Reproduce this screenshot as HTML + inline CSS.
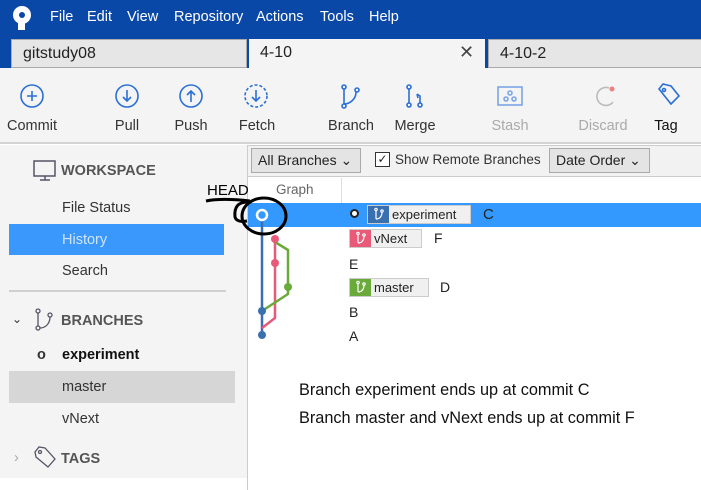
<!DOCTYPE html><html><head><style>
*{margin:0;padding:0;box-sizing:border-box}
body{width:701px;height:490px;overflow:hidden;background:#fff;font-family:"Liberation Sans",sans-serif;position:relative;font-size:14px;color:#222}
.a{position:absolute}
.menu{left:0;top:0;width:701px;height:37px;background:#0a48a8;color:#fff;font-size:14.5px}
.menu span{position:absolute;top:9px}
.tabs{left:0;top:37px;width:701px;height:31px;background:#0a48a8}
.tab{position:absolute;top:2px;height:29px;background:#e6e6e6;border:1px solid #aaa;font-size:16px;padding:5px 11px;color:#222}
.tb{left:0;top:68px;width:701px;height:76px;background:#f4f4f4;border-bottom:2px solid #d4d4d4}
.lbl{position:absolute;top:50px;font-size:14.5px;color:#333;transform:translateX(-50%)}
.side{left:0;top:145px;width:247px;height:333px;background:#f4f4f4}
.si{position:absolute;font-size:14.5px;color:#333}
.bi{position:absolute;left:0;top:0;width:21px;height:17px}
</style></head><body>
<div class="a menu">
<svg class="a" style="left:10px;top:5px" width="24" height="26"><circle cx="12" cy="10" r="9" fill="#fff"/><circle cx="12" cy="10" r="3" fill="#0a48a8"/><rect x="8" y="14" width="7" height="11" fill="#fff"/></svg>
<span style="left:50px">File</span><span style="left:87px">Edit</span><span style="left:127px">View</span><span style="left:174px">Repository</span><span style="left:256px">Actions</span><span style="left:320px">Tools</span><span style="left:369px">Help</span>
</div>
<div class="a tabs">
<div class="tab" style="left:11px;width:236px">gitstudy08</div>
<div class="tab" style="left:249px;width:236px;background:#f4f4f4;border:none;height:31px">4-10<span style="position:absolute;left:210px;top:3px;font-size:18px;color:#444">✕</span></div>
<div class="tab" style="left:488px;width:220px">4-10-2</div>
</div>
<div class="a tb">
<svg class="a" style="left:0;top:0" width="701" height="60" fill="none" stroke-width="1.6">
<g stroke="#2a6fd6"><circle cx="32" cy="28" r="11"/><path d="M32 23v10M27 28h10"/>
<circle cx="127" cy="28" r="11"/><path d="M127 22v11M123 29l4 4 4-4"/>
<circle cx="191" cy="28" r="11"/><path d="M191 34v-11M187 27l4-4 4 4"/>
<circle cx="256" cy="28" r="11" stroke-dasharray="3 2"/><path d="M256 22v11M252 29l4 4 4-4"/>
<path d="M344 21v15M344 36c5 0 12-4 12-12"/><circle cx="344" cy="19" r="2"/><circle cx="344" cy="38" r="2"/><circle cx="357" cy="22" r="2"/>
<path d="M409 21v14"/><circle cx="409" cy="19" r="2"/><circle cx="409" cy="37" r="2"/><circle cx="420" cy="37" r="2"/><path d="M420 35v-7l-3-2M417 26l1 4"/>
<path d="M659 21l4-5 8 2 8 10-8 8z"/><circle cx="664" cy="22" r="1.5"/></g>
<g stroke="#7aa7e8"><rect x="498" y="19" width="24" height="18"/><circle cx="510" cy="25" r="2"/><circle cx="506" cy="31" r="2"/><circle cx="514" cy="31" r="2"/></g>
<path d="M609 20a9 9 0 1 0 4 14" stroke="#bbb"/><circle cx="612" cy="21" r="2.5" fill="#f08080"/>
</svg>
<span class="lbl" style="left:32px">Commit</span><span class="lbl" style="left:127px">Pull</span><span class="lbl" style="left:191px">Push</span><span class="lbl" style="left:257px">Fetch</span><span class="lbl" style="left:351px">Branch</span><span class="lbl" style="left:415px">Merge</span><span class="lbl" style="left:510px;color:#aaa">Stash</span><span class="lbl" style="left:603px;color:#aaa">Discard</span><span class="lbl" style="left:666px;color:#111">Tag</span>
</div>
<div class="a side">
<svg class="a" style="left:33px;top:15px" width="24" height="24" fill="none" stroke="#556"><rect x="1" y="1" width="21" height="15" stroke-width="1.5"/><path d="M7 20h10M12 16v4" stroke-width="1.5"/></svg>
<span class="si" style="left:61px;top:18px;font-weight:bold;color:#555">WORKSPACE</span>
<span class="si" style="left:62px;top:55px">File Status</span>
<div class="a" style="left:9px;top:79px;width:215px;height:31px;background:#3a97fb"></div>
<span class="si" style="left:62px;top:87px;color:#cfe4ff">History</span>
<span class="si" style="left:62px;top:118px">Search</span>
<div class="a" style="left:9px;top:145px;width:217px;height:2px;background:#d0d0d0"></div>
<span class="si" style="left:12px;top:167px;font-size:12px">⌄</span>
<svg class="a" style="left:34px;top:163px" width="20" height="24" fill="none" stroke="#556" stroke-width="1.3"><circle cx="4" cy="3" r="2"/><circle cx="4" cy="20" r="2"/><circle cx="16" cy="7" r="2"/><path d="M4 5v13M6 20c6 0 10-5 10-11"/></svg>
<span class="si" style="left:61px;top:168px;font-weight:bold;color:#555">BRANCHES</span>
<span class="si" style="left:37px;top:202px;font-weight:bold">o</span>
<span class="si" style="left:62px;top:202px;font-weight:bold;color:#111">experiment</span>
<div class="a" style="left:9px;top:226px;width:226px;height:32px;background:#d6d6d6"></div>
<span class="si" style="left:62px;top:234px">master</span>
<span class="si" style="left:62px;top:266px">vNext</span>
<span class="si" style="left:14px;top:305px;color:#aaa">›</span>
<svg class="a" style="left:33px;top:300px" width="24" height="24" fill="none" stroke="#556" stroke-width="1.3"><path d="M2 7l4-5 6 1 10 11-7 8L3 12z"/><circle cx="7" cy="7" r="1.5"/></svg>
<span class="si" style="left:61px;top:306px;font-weight:bold;color:#555">TAGS</span>
</div>
<div class="a" style="left:247px;top:145px;width:1px;height:345px;background:#ccc"></div>
<div class="a" style="left:248px;top:145px;width:453px;height:32px;background:#f2f2f2;border-top:1px solid #ccc;border-bottom:1px solid #ccc"></div>
<div class="a" style="left:251px;top:148px;width:110px;height:25px;border:1px solid #aaa;background:#e4e4e4;font-size:14px;padding:3px 6px">All Branches ⌄</div>
<div class="a" style="left:375px;top:152px;width:15px;height:15px;border:1px solid #333;background:#fff;font-size:12px;line-height:13px;text-align:center">✓</div>
<span class="a" style="left:395px;top:152px;font-size:13.5px;color:#333">Show Remote Branches</span>
<div class="a" style="left:549px;top:148px;width:101px;height:25px;border:1px solid #aaa;background:#e4e4e4;font-size:14px;padding:3px 6px">Date Order ⌄</div>
<span class="a" style="left:276px;top:182px;font-size:13.5px;color:#666">Graph</span>
<div class="a" style="left:341px;top:178px;width:1px;height:25px;background:#ddd"></div>
<div class="a" style="left:248px;top:203px;width:453px;height:24px;background:#3399ff"></div>
<svg class="a" style="left:200px;top:180px" width="150" height="170" fill="none">
<path d="M62 35v120" stroke="#3a6fb0" stroke-width="2.5"/>
<path d="M75 59v79l-13 10" stroke="#e85a78" stroke-width="2.5"/>
<path d="M75 62l13 8v44l-26 17" stroke="#6aaa3a" stroke-width="2.5"/>
<circle cx="75" cy="59" r="4" fill="#e85a78"/><circle cx="75" cy="83" r="4" fill="#e85a78"/><circle cx="88" cy="107" r="4" fill="#6aaa3a"/>
<circle cx="62" cy="131" r="4" fill="#3a6fb0"/><circle cx="62" cy="155" r="4" fill="#3a6fb0"/>
<circle cx="62" cy="35" r="5" fill="#3399ff" stroke="#fff" stroke-width="2.5"/>
<ellipse cx="64" cy="36" rx="22" ry="18" stroke="#000" stroke-width="3"/>
<path d="M6 21c15-3 35-1 44 0M48 22c-10 0-14 5-13 15 1 4 6 5 12 4" stroke="#000" stroke-width="3"/>
</svg>
<span class="a" style="left:207px;top:182px;font-size:15px;color:#000">HEAD</span>
<div class="a" style="left:350px;top:209px;width:9px;height:9px;border:2.5px solid #222;border-radius:50%;background:#fff"></div>
<div class="a" style="left:367px;top:205px;width:104px;height:19px;background:#f0f0f0;border:1px solid #ccc;font-size:13px;padding:1px 0 0 24px">experiment<svg class="bi" style="background:#3a6fb0" fill="none" stroke="#fff" stroke-width="1.2"><path d="M8 4v9M8 13c4 0 6-3 6-7"/><circle cx="8" cy="3.5" r="1.2"/><circle cx="14" cy="5" r="1.2"/></svg></div>
<span class="a" style="left:483px;top:206px;font-size:15px">C</span>
<div class="a" style="left:349px;top:229px;width:73px;height:19px;background:#f0f0f0;border:1px solid #ccc;font-size:13px;padding:1px 0 0 24px">vNext<svg class="bi" style="background:#e85a78" fill="none" stroke="#fff" stroke-width="1.2"><path d="M8 4v9M8 13c4 0 6-3 6-7"/><circle cx="8" cy="3.5" r="1.2"/><circle cx="14" cy="5" r="1.2"/></svg></div>
<span class="a" style="left:434px;top:230px;font-size:14px">F</span>
<span class="a" style="left:349px;top:256px;font-size:14px">E</span>
<div class="a" style="left:349px;top:278px;width:80px;height:19px;background:#f0f0f0;border:1px solid #ccc;font-size:13px;padding:1px 0 0 24px">master<svg class="bi" style="background:#6aaa3a" fill="none" stroke="#fff" stroke-width="1.2"><path d="M8 4v9M8 13c4 0 6-3 6-7"/><circle cx="8" cy="3.5" r="1.2"/><circle cx="14" cy="5" r="1.2"/></svg></div>
<span class="a" style="left:440px;top:279px;font-size:14px">D</span>
<span class="a" style="left:349px;top:304px;font-size:14px">B</span>
<span class="a" style="left:349px;top:328px;font-size:14px">A</span>
<span class="a" style="left:299px;top:381px;font-size:16.3px;color:#111">Branch experiment ends up at commit C</span>
<span class="a" style="left:299px;top:409px;font-size:16.3px;color:#111">Branch master and vNext ends up at commit F</span>
</body></html>
